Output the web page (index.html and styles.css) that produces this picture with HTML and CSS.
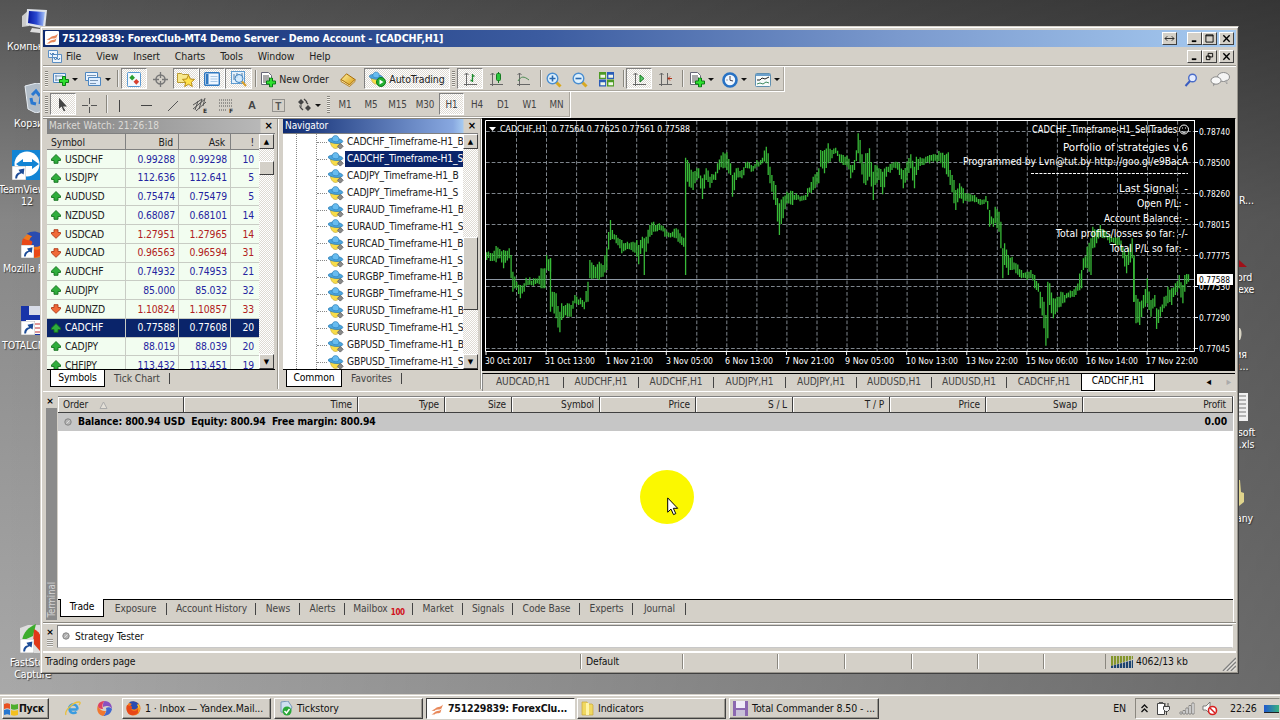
FILE: index.html
```html
<!DOCTYPE html>
<html lang="en">
<head>
<meta charset="utf-8">
<title>CADCHF,H1</title>
<link rel="stylesheet" href="styles.css">
</head>
<body>
<svg class="defs" width="0" height="0">
<defs>
<linearGradient id="gold" x1="0" y1="0" x2="1" y2="1"><stop offset="0" stop-color="#fff3a0"/><stop offset="1" stop-color="#d89a14"/></linearGradient>
<linearGradient id="scr" x1="0" y1="0" x2="1" y2="0"><stop offset="0" stop-color="#0818a0"/><stop offset=".5" stop-color="#2a48d0"/><stop offset="1" stop-color="#a8c4f8"/></linearGradient>
</defs>
<symbol id="plus" viewBox="0 0 10 10"><path d="M3.500 .5h3v3h3v3h-3v3h-3v-3h-3v-3h3z" fill="#2fe02f" stroke="#0a7a14"/></symbol>
<symbol id="fx" viewBox="0 0 14 14"><rect width="14" height="14" rx="1" fill="#fff"/><path d="M1.500 8.500c4-1 4-3 7-3.500 2 0 3-1 4.500-2.500l-1.500 4c-3 2-5 0-7 2.500zM1.500 12.500c3-1 3-3 6-3.500 2 0 3-1 4-2l-1 3.500c-3 1.500-4 0-6 2z" fill="#e8885a"/></symbol>
<symbol id="mdi" viewBox="0 0 14 13"><path d="M.5.5h9v7h-9zM4.500 4.500h9v8h-9z" fill="#eef5fc" stroke="#5b8fc4"/><path d="M2 3l1.500 2 1.500-2 1.500 2M6 8l1.500 2L9 8l1.500 2L12 8" stroke="#3c74b0" fill="none"/></symbol>
<symbol id="newchart" viewBox="0 0 16 15"><path d="M.5 1.500h12v9H.5z" fill="#eaf4ff" stroke="#4d86c0"/><path d="M2 4h8M3 3v6M2 8h5" stroke="#7794b5"/><use href="#plus" x="6" y="4" width="10" height="10"/></symbol>
<symbol id="profiles" viewBox="0 0 17 15"><path d="M.5.500h12v8H.5z" fill="#eaf4ff" stroke="#4d86c0"/><path d="M3.500 5.500h12v8h-12z" fill="#dfeeff" stroke="#4d86c0"/><path d="M2 3.500h9M5 8.500h8M5 11.500h6" stroke="#7794b5"/></symbol>
<symbol id="mwatch" viewBox="0 0 15 16"><rect x=".5" y=".5" width="14" height="15" rx="1" fill="#f4faff" stroke="#4a90d0"/><path d="M2.500 6L5.500 3l3 3-3 3z" fill="#28a030"/><path d="M7 10.500l3 3 3-3-3-3z" fill="#d84030"/></symbol>
<symbol id="target" viewBox="0 0 15 15"><circle cx="7.500" cy="7.500" r="4.500" fill="none" stroke="#777" stroke-width="1.500"/><path d="M7.500 0v6M7.500 9v6M0 7.500h6M9 7.500h6" stroke="#777" stroke-width="1.300"/></symbol>
<symbol id="star" viewBox="0 0 18 16"><path d="M.5 2.500h4l1 1h6v8H.500z" fill="#f8e88c" stroke="#b99a30"/><path d="M11.500 4l1.800 4 4.200.4-3.200 2.900 1 4.200-3.800-2.200-3.800 2.200 1-4.200L5.500 8.400 9.700 8z" fill="#ffe24c" stroke="#b88a14"/></symbol>
<symbol id="winlist" viewBox="0 0 16 14"><rect x=".7" y=".7" width="14.600" height="12.600" rx="1" fill="#f0f7ff" stroke="#2f78c0" stroke-width="1.400"/><path d="M2 2h2.500v10H2z" fill="#2f78c0"/><path d="M6.500 4.500h7M6.500 7h7M6.500 9.500h7" stroke="#a9c8e6"/></symbol>
<symbol id="tester" viewBox="0 0 16 16"><rect x=".5" y=".5" width="13" height="12" fill="#e4f1fc" stroke="#5e9bd0"/><path d="M3 3v6M6 2v5M11 2v6" stroke="#5b7ea0"/><circle cx="8" cy="7.500" r="4" fill="#cfe8fbcc" stroke="#3a80c0"/><path d="M11 10.500l4 4.500" stroke="#d8a030" stroke-width="2.200"/></symbol>
<symbol id="neworder" viewBox="0 0 15 16"><path d="M.5.500h7l3 3v9H.500z" fill="#fff" stroke="#667"/><path d="M2 4h6M2 6h7M2 8h6M2 10h4" stroke="#555"/><use href="#plus" x="5" y="5.500" width="10" height="10"/></symbol>
<symbol id="book" viewBox="0 0 16 14"><path d="M1 6.500L6.500.800 15 6.500 9.500 12z" fill="url(#gold)" stroke="#a56a08"/><path d="M1 6.500v2L9.500 13.500 15 8.500v-2L9.500 12z" fill="#fff0b0" stroke="#a56a08" stroke-width=".8"/></symbol>
<symbol id="hat" viewBox="0 0 16 15"><path d="M2.500 7h10c0 3.500-2.500 6.500-5 6.500s-5-3-5-6.500z" fill="#f8dc48" stroke="#b99a28" stroke-width=".6"/><ellipse cx="7.500" cy="5.800" rx="7.300" ry="2.600" transform="rotate(6 7.500 5.800)" fill="#4aa6e0" stroke="#2a78b0" stroke-width=".7"/><path d="M4 5C4 2 5.500 .600 7.500 .600S11 2 11 5 4 6.500 4 5z" fill="#67bcf0" stroke="#2a78b0" stroke-width=".6"/></symbol>
<symbol id="hatgear" viewBox="0 0 16 15"><use href="#hat" width="16" height="15"/><path d="M12.300 8.500l2.800 2.800-2.800 2.800-2.800-2.800z" fill="#8a8a8a" stroke="#6a6a6a"/></symbol>
<symbol id="auto" viewBox="0 0 17 16"><use href="#hat" width="15" height="15"/><circle cx="12" cy="11" r="4.500" fill="#22b030" stroke="#0c7a18"/><path d="M10.500 8.500v5l4-2.500z" fill="#fff"/></symbol>
<symbol id="bars" viewBox="0 0 15 15"><path d="M3.500 1v13M1 12.500h13M1.500 3l2-2 2 2" stroke="#666" fill="none"/><path d="M9.500 2v8M7.500 8.500h2M9.500 4h2" stroke="#1c8a2c" stroke-width="1.300"/></symbol>
<symbol id="candle" viewBox="0 0 15 15"><path d="M3.500 1v13M1 12.500h13M1.500 3l2-2 2 2" stroke="#666" fill="none"/><path d="M9.500 0v11" stroke="#167a22"/><rect x="7.500" y="1.500" width="4" height="7" rx="1" fill="#28c83c" stroke="#167a22"/></symbol>
<symbol id="line" viewBox="0 0 15 15"><path d="M3.500 1v13M1 12.500h13M1.500 3l2-2 2 2" stroke="#666" fill="none"/><path d="M2 9c3-5 6-5 11-1" stroke="#4a8a50" fill="none"/></symbol>
<symbol id="zin" viewBox="0 0 16 16"><path d="M9.500 9.500l5 5" stroke="#d8a820" stroke-width="3"/><circle cx="6.500" cy="6.500" r="5.300" fill="#dff1fd" stroke="#4a8ed0" stroke-width="1.400"/><path d="M3.500 6.500h6M6.500 3.500v6" stroke="#2868b0" stroke-width="1.600"/></symbol>
<symbol id="zout" viewBox="0 0 16 16"><path d="M9.500 9.500l5 5" stroke="#d8a820" stroke-width="3"/><circle cx="6.500" cy="6.500" r="5.300" fill="#dff1fd" stroke="#4a8ed0" stroke-width="1.400"/><path d="M3.500 6.500h6" stroke="#2868b0" stroke-width="1.600"/></symbol>
<symbol id="tile" viewBox="0 0 16 16"><path d="M0 0h7.500v7.500H0zM8.500 8h7.500v7.500H8.500z" fill="#4d9a24"/><path d="M8.500 0H16v7.500H8.500zM0 8h7.500v7.500H0z" fill="#2a5cb8"/><path d="M1.500 3h5v3h-5zM10 3h5v3h-5zM1.500 11h5v3h-5zM10 11h5v3h-5z" fill="#f0f6e8"/></symbol>
<symbol id="scroll" viewBox="0 0 15 15"><path d="M3.500 1v13M1 12.500h13M1.500 3l2-2 2 2" stroke="#666" fill="none"/><path d="M8 3v7l4-3.500z" fill="#58c868" stroke="#167a22"/></symbol>
<symbol id="shift" viewBox="0 0 15 15"><path d="M3.500 1v13M1 12.500h13M1.500 3l2-2 2 2M9.500 1v11" stroke="#666" fill="none"/><path d="M14 6.500h-4M12 4.500l-2 2 2 2" stroke="#b03018" fill="none"/></symbol>
<symbol id="clock" viewBox="0 0 16 16"><circle cx="8" cy="8" r="6.500" fill="#f2f8ff" stroke="#2872c4" stroke-width="2.600"/><path d="M8 4v4.300l3 .7M4.500 8h1" stroke="#445" fill="none"/></symbol>
<symbol id="template" viewBox="0 0 16 14"><rect x=".5" y=".5" width="15" height="13" rx="1" fill="#f5fafa" stroke="#5f8fb0"/><path d="M1 1h14v2H1z" fill="#6ba0cc"/><path d="M2 7h3l2-2 3 1 4-2" stroke="#222" fill="none"/><path d="M2 11l3-1 3 1 3-2 3 1" stroke="#3f8a60" fill="none"/></symbol>
<symbol id="search" viewBox="0 0 14 14"><circle cx="8.500" cy="5" r="3.800" fill="#e4ecff" stroke="#4a6cc8" stroke-width="1.400"/><path d="M6 8l-4.500 5" stroke="#3a5cc0" stroke-width="2"/></symbol>
<symbol id="chat" viewBox="0 0 20 15"><ellipse cx="13.500" cy="5" rx="6" ry="4.500" fill="#f4f4f4" stroke="#8a8a8a"/><path d="M15 9l2 3-.5-4z" fill="#eee" stroke="#8a8a8a" stroke-width=".6"/><ellipse cx="6" cy="8.500" rx="5" ry="3.700" fill="#f8f8f8" stroke="#8a8a8a"/><path d="M3 11.500v3l2.500-2.500z" fill="#999"/></symbol>
<symbol id="up" viewBox="0 0 10 10"><path d="M5 .5L9.500 5v1.500H7v2.800H3V6.500H.500V5z" fill="#2fae3c" stroke="#14701e" stroke-width=".9"/></symbol>
<symbol id="dn" viewBox="0 0 10 10"><path d="M5 9.300L9.500 5V3.500H7V.700H3v2.800H.500V5z" fill="#f06a38" stroke="#b03a18" stroke-width=".9"/></symbol>
<symbol id="cursor" viewBox="0 0 12 19"><path d="M.7.900v14.300l3.300-3.100 2.500 5.500 2.300-1-2.500-5.300h4.400z" fill="#fff" stroke="#000"/></symbol>
<symbol id="dot" viewBox="0 0 8 8"><circle cx="4" cy="4" r="3.200" fill="#b4b4b4" stroke="#848484"/><path d="M2.500 5.500l3-3" stroke="#ddd"/></symbol>
<symbol id="short" viewBox="0 0 13 13"><rect width="13" height="13" fill="#fff" stroke="#999" stroke-width=".6"/><path d="M3 11.500C3 8 5 6 7.500 5.800L6 3.500l5.500-1.200L10.800 8 9 6.800C6.500 7.500 5 9 4.700 11.500z" fill="#1c4c98"/></symbol>
<symbol id="firefox" viewBox="0 0 15 15"><circle cx="7.500" cy="7.500" r="7" fill="#f0781c"/><path d="M3 1.500a7 7 0 0 1 9 .8C14 5 10 10 6 8 4 7 4 4 6 3z" fill="#2a4cb0"/><path d="M1 4c1 0 2 1 3 1 2 0 3 1 1 3 2 3 6 3 8-2 1 6-4 9-8 8S-.5 8 1 4z" fill="#e84818"/><path d="M12 3c2 2 2.500 6 0 8.500 1-3 .5-5.500-1-7.500z" fill="#ffc828"/></symbol>
</svg>

<main class="desktop">
  <div class="shortcut s1"><svg width="30" height="28" viewBox="0 0 30 28"><path d="M2 8l7-6v16l-7 1z" fill="#ccc"/><path d="M7 1l20 1-2 19-19-4z" fill="#dfe3ea"/><path d="M9 3l16 1-2 14-15-3z" fill="url(#scr)"/><path d="M12 20l8 1v4l-10-1z" fill="#ddd"/></svg></div>
  <span class="lab l1">Компьютер</span>
  <div class="shortcut s2"><svg width="26" height="30" viewBox="0 0 26 30"><path d="M1 3l12-3 12 3-3 24-10 3-8-4z" fill="#c4d2e0cc" stroke="#e8eef4"/><path d="M8 12l4-4 4 5M7 15l1 5 4 1M17 14l-1 7" stroke="#2a78d0" stroke-width="3" fill="none"/></svg></div>
  <span class="lab l2">Корзина</span>
  <div class="shortcut s3"><svg width="30" height="30" viewBox="0 0 30 30"><rect width="30" height="30" fill="#1284d4"/><circle cx="15" cy="14" r="12.500" fill="#fff"/><path d="M4 14l7-5v3h9V9l7 5-7 5v-3h-9v3z" fill="#1284d4"/><use href="#short" y="16" width="14" height="14"/></svg></div>
  <span class="lab l3">TeamViewer<br>12</span>
  <div class="shortcut s4"><svg width="28" height="28" viewBox="0 0 28 28"><use href="#firefox" width="28" height="28"/><use href="#short" y="14" width="13" height="13"/></svg></div>
  <span class="lab l4">Mozilla Firefox</span>
  <div class="shortcut s5"><svg width="28" height="29" viewBox="0 0 28 29"><rect width="28" height="29" fill="#1834a8"/><path d="M8 0h14v9H8z" fill="#d8dce8"/><path d="M5 14h20v14H5z" fill="#fff"/><path d="M14 18h8M14 22h8M14 26h8" stroke="#c03030"/><use href="#short" y="15" width="14" height="14"/></svg></div>
  <span class="lab l5">TOTALCMD</span>
  <div class="shortcut s6"><svg width="28" height="29" viewBox="0 0 28 29"><path d="M0 4l8-3h20v28H0z" fill="#ddd"/><path d="M2 17C3 8 9 3 16 0l-3 12z" fill="#3cac2c"/><path d="M14 5c7 3 10 12 6 22l-7-8z" fill="#e03818"/><use href="#short" y="15" width="14" height="14"/></svg></div>
  <span class="lab l6">FastStone<br>Capture</span>
  <span class="lab r1">R...</span><svg class="tri" width="8" height="8"><path d="M0 0l8 7H0z" fill="#a01018"/></svg>
  <span class="lab r2">ord<br>.exe</span><span class="lab r3">ия<br>я...</span>
  <svg class="lever" width="6" height="16"><path d="M0 2h2c2 3 2 8 0 12H0z" fill="#d8d4c4"/></svg>
  <svg class="sheet" width="9" height="28"><path d="M0 0h9v28H0z" fill="#f0f0f0"/><path d="M0 3h7M0 7h7M0 11h7M0 15h7M0 19h7M0 23h7" stroke="#777"/></svg>
  <span class="lab r4">soft<br>.xls</span>
  <svg class="sheet key" width="6" height="26"><path d="M0 0h1l1 12 3 1v9l-5 4z" fill="#e0d48c"/></svg>
  <span class="lab r5">any</span>

  <section class="window">
    <header class="title"><svg width="14" height="14"><use href="#fx"/></svg><b>751229839: ForexClub-MT4 Demo Server - Demo Account - [CADCHF,H1]</b>
      <div class="caps"><i class="cap"><svg viewBox="0 0 12 10"><path d="M1 5h10M3.500 2.500L1 5l2.500 2.500M8.500 2.500L11 5 8.500 7.500" stroke="#222" fill="none"/></svg></i><i class="cap c2"><svg viewBox="0 0 12 10"><path d="M3 8h5" stroke="#000" stroke-width="2"/></svg></i><i class="cap"><svg viewBox="0 0 12 10"><path d="M2 1h8v8H2zM2 2h8" stroke="#000" fill="none"/></svg></i><i class="cap c3"><svg viewBox="0 0 12 10"><path d="M2.500 1.500l7 7M9.500 1.500l-7 7" stroke="#000" stroke-width="1.500"/></svg></i></div>
    </header>
    <nav class="menu"><svg width="14" height="13"><use href="#mdi"/></svg><span>File</span><span>View</span><span>Insert</span><span>Charts</span><span>Tools</span><span>Window</span><span>Help</span>
      <div class="caps"><i class="cap"><svg viewBox="0 0 12 10"><path d="M3 8h5" stroke="#000" stroke-width="2"/></svg></i><i class="cap"><svg viewBox="0 0 12 10"><path d="M4.500 1.500h5v4h-5zM2.500 4.500h4v4h-4z" stroke="#000" fill="none"/></svg></i><i class="cap c3"><svg viewBox="0 0 12 10"><path d="M2.500 1.500l7 7M9.500 1.500l-7 7" stroke="#000" stroke-width="1.500"/></svg></i></div>
    </nav>
    <div class="toolbar t1">
      <div class="strip strip1">
        <i class="grip"></i>
        <span class="drop"><svg width="16" height="15"><use href="#newchart"/></svg></span>
        <span class="drop"><svg width="17" height="15"><use href="#profiles"/></svg></span>
        <i class="vsep"></i>
        <span class="on"><svg width="14" height="15"><use href="#mwatch"/></svg></span>
        <span><svg width="15" height="15"><use href="#target"/></svg></span>
        <span class="on"><svg width="18" height="16"><use href="#star"/></svg></span>
        <span class="on"><svg width="16" height="14"><use href="#winlist"/></svg></span>
        <span class="on"><svg width="16" height="16"><use href="#tester"/></svg></span>
        <i class="vsep"></i>
        <span class="txt"><svg width="15" height="16"><use href="#neworder"/></svg>New Order</span>
        <span><svg width="16" height="14"><use href="#book"/></svg></span>
        <span class="on txt"><svg width="17" height="16"><use href="#auto"/></svg>AutoTrading</span>
        <i class="grip"></i>
        <span class="on"><svg width="15" height="15"><use href="#bars"/></svg></span>
        <span><svg width="15" height="15"><use href="#candle"/></svg></span>
        <span><svg width="15" height="15"><use href="#line"/></svg></span>
        <i class="vsep"></i>
        <span><svg width="16" height="16"><use href="#zin"/></svg></span>
        <span><svg width="16" height="16"><use href="#zout"/></svg></span>
        <span><svg width="15" height="15"><use href="#tile"/></svg></span>
        <i class="vsep"></i>
        <span class="on"><svg width="15" height="15"><use href="#scroll"/></svg></span>
        <span><svg width="15" height="15"><use href="#shift"/></svg></span>
        <i class="vsep"></i>
        <span class="drop"><svg width="15" height="16"><use href="#neworder"/></svg></span>
        <span class="drop"><svg width="16" height="16"><use href="#clock"/></svg></span>
        <span class="drop"><svg width="16" height="14"><use href="#template"/></svg></span>
      </div>
      <div class="tools"><svg width="14" height="14"><use href="#search"/></svg><svg width="20" height="15"><use href="#chat"/></svg></div>
    </div>
    <div class="toolbar">
      <div class="strip strip2">
        <i class="grip"></i>
        <span class="on"><svg width="10" height="15" viewBox="0 0 12 19"><path d="M1 1v14l3-3 3 6 2-1-3-5h5z" fill="#444"/></svg></span>
        <span><svg width="15" height="15"><path d="M7.500 0v6M7.500 9v6M0 7.500h6M9 7.500h6" stroke="#555"/></svg></span>
        <i class="vsep"></i>
        <span><svg width="15" height="15"><path d="M7.500 2v12" stroke="#444"/></svg></span>
        <span><svg width="15" height="15"><path d="M2 7.500h11" stroke="#444"/></svg></span>
        <span><svg width="15" height="15"><path d="M2 13L12 3" stroke="#555"/></svg></span>
        <span><svg width="17" height="17"><path d="M1 12L13 2M1 8l9-6M4 14L14 5M3 13l3-9M7 12l3-10M11 9l2-8" stroke="#555"/><text x="11" y="16" class="tiny">E</text></svg></span>
        <span><svg width="17" height="17"><path d="M1 3h13M1 6h13M1 9h13M1 13h8" stroke="#555" stroke-dasharray="1 1"/><text x="11" y="16" class="tiny">F</text></svg></span>
        <span class="lett">A</span>
        <span><svg width="15" height="15"><rect x="1.500" y="1.500" width="12" height="12" fill="none" stroke="#555" stroke-dasharray="1 1"/><text x="4.300" y="11.500" class="tee">T</text></svg></span>
        <span class="drop"><svg width="15" height="14"><path d="M1 4l3-3 3 3-3 3zM8 10l3-3 3 3-3 3z" fill="#444"/><path d="M7 1l3 3M3 9l3 3M9 4l2 2M2 8h3" stroke="#444" stroke-width="1.200"/></svg></span>
        <i class="grip"></i>
        <span>M1</span><span>M5</span><span>M15</span><span>M30</span><span class="on">H1</span><span>H4</span><span>D1</span><span>W1</span><span>MN</span>
      </div>
    </div>

    <div class="panels">
      <section class="panel market">
        <header class="ptitle off">Market Watch: 21:26:18<em>×</em></header>
        <div class="pbody">
          <div class="grid-wrap"><div class="qrow qhead"><span>Symbol</span><span>Bid</span><span>Ask</span><span>!</span></div><div id="quotes"></div></div>
          <div class="sbar m"><i class="sb">▲</i><i class="thumb"></i><i class="sb">▼</i></div>
        </div>
        <footer class="ptabs"><b>Symbols</b><span>Tick Chart</span></footer>
      </section>
      <section class="panel navi">
        <header class="ptitle">Navigator<em>×</em></header>
        <div class="pbody">
          <div id="tree"></div>
          <div class="sbar n"><i class="sb">▲</i><i class="thumb"></i><i class="sb">▼</i></div>
        </div>
        <footer class="ptabs"><b>Common</b><span>Favorites</span></footer>
      </section>
      <section class="chartcol">
        <svg id="chart" width="753" height="253" viewBox="482 118 753 253"></svg>
        <footer class="ctabs"><span>AUDCAD,H1</span><span>AUDCHF,H1</span><span>AUDCHF,H1</span><span>AUDJPY,H1</span><span>AUDJPY,H1</span><span>AUDUSD,H1</span><span>AUDUSD,H1</span><span>CADCHF,H1</span><b>CADCHF,H1</b><i>◂</i><i class="dim">▸</i></footer>
      </section>
    </div>

    <section class="terminal">
      <aside><em>×</em><div class="side"><span>Terminal</span></div></aside>
      <div class="tmain">
        <div class="thead"><span>Order<svg width="9" height="8"><path d="M4.500 1L1 7.500h7z" fill="#e4e0d8" stroke="#aaa"/></svg></span><span>Time</span><span>Type</span><span>Size</span><span>Symbol</span><span>Price</span><span>S / L</span><span>T / P</span><span>Price</span><span>Swap</span><span>Profit</span></div>
        <div class="bal"><svg width="8" height="8"><use href="#dot"/></svg><b>Balance: 800.94 USD&nbsp; Equity: 800.94&nbsp; Free margin: 800.94</b><b class="zero">0.00</b></div>
        <div class="blank"></div>
        <footer class="ttabs"><b>Trade</b><span>Exposure</span><span>Account History</span><span>News</span><span>Alerts</span><span>Mailbox<sub>100</sub></span><span>Market</span><span>Signals</span><span>Code Base</span><span>Experts</span><span>Journal</span></footer>
      </div>
    </section>
    <section class="strategy"><aside><em>×</em><i></i></aside><div class="sbox"><svg width="8" height="8"><use href="#dot"/></svg>Strategy Tester</div></section>
    <footer class="status"><span>Trading orders page</span><span>Default</span><span></span><span></span><span></span><span></span><span></span><span class="conn"><svg width="22" height="13"><path d="M0 1h22v3L0 11z" fill="#84962c"/><path d="M0 13v-2L22 5v8z" fill="#1c4470"/><path d="M2.500 0v13M5.500 0v13M8.500 0v13M11.500 0v13M14.500 0v13M17.500 0v13M20.500 0v13" stroke="#d4d0c8" stroke-width=".8"/></svg>4062/13 kb</span>
      <svg class="size" width="14" height="14"><path d="M1 14L14 1M5 14l9-9M9 14l5-5" stroke="#808080" stroke-width="1.500"/><path d="M2.500 14L14 2.500M6.500 14L14 6.500M10.500 14l3.500-3.500" stroke="#fff" stroke-width=".7"/></svg></footer>
  </section>

  <div class="halo"></div>
  <svg class="pointer" width="12" height="19"><use href="#cursor"/></svg>

  <footer class="taskbar">
    <b class="start"><svg width="14" height="14" viewBox="0 0 14 14"><path d="M0 2c3-1 4-1 6 0v5C4 6 3 6 0 7z" fill="#e85020"/><path d="M7 2c2 1 4 1 7 0v5c-3 1-5 1-7 0z" fill="#4cae2c"/><path d="M0 8c3-1 4-1 6 0v5c-2-1-3-1-6 0z" fill="#2878d0"/><path d="M7 8c2 1 4 1 7 0v5c-3 1-5 1-7 0z" fill="#f4c020"/></svg>Пуск</b>
    <span class="quick"><svg width="16" height="15" viewBox="0 0 16 15"><path d="M12.500 8.500H4.500C5 12 9 13 11.500 11" stroke="#3a9ce0" stroke-width="2.400" fill="none"/><path d="M12.500 8.500C13 2 4 2 4 8" stroke="#3a9ce0" stroke-width="2.400" fill="none"/><path d="M1 14C-1 10 8 1 14 1c2 0 1 2 0 3" stroke="#e8c040" fill="none" stroke-width="1.300"/></svg></span>
    <span class="quick"><svg width="15" height="15" viewBox="0 0 15 15"><path d="M7.500 0C13 0 15 4 15 8 12 4 10 5 6 6 6 3 6 1 7.500 0z" fill="#8a50c0"/><path d="M15 8c-1 5-5 7-9 7 3-3 4-5 3-8 2-1 4-1 6 1z" fill="#4068d0"/><path d="M6 15C1 14-1 9 1 4c1 4 3 6 8 6-1 2-1 4-3 5z" fill="#f07830"/><path d="M1 4C2 1 5 0 7.500 0 5 3 5 5 6 8 3 8 1 7 1 4z" fill="#e04060"/></svg></span>
    <span class="task"><svg width="15" height="15"><use href="#firefox"/></svg>1 · Inbox — Yandex.Mail...</span>
    <span class="task"><svg width="15" height="15" viewBox="0 0 15 15"><path d="M3 1l7-1 4 6-2 6-9-1z" fill="#cfe0f0" stroke="#7a98b8"/><circle cx="9" cy="10" r="4.500" fill="#2aa838"/><path d="M6.500 10l2 2 3-4" stroke="#fff" stroke-width="1.500" fill="none"/></svg>Tickstory</span>
    <b class="task act"><svg width="14" height="14"><use href="#fx"/></svg>751229839: ForexClu...</b>
    <span class="task"><svg width="13" height="15" viewBox="0 0 13 15"><path d="M1 1h5l1 2h4l1 1v10H1z" fill="#f0d860" stroke="#c8a838" stroke-width=".7"/><path d="M5 2h3v12H5z" fill="#fff4a8"/></svg>Indicators</span>
    <span class="task"><svg width="15" height="15" viewBox="0 0 15 15"><path d="M0 0h15v15H0z" fill="#8c68b0"/><path d="M3 0h9v7H3z" fill="#f0ecf8"/><path d="M3 9h9v6H3z" fill="#c8c0d8"/></svg>Total Commander 8.50 - ...</span>
    <span class="en">EN</span>
    <div class="tray"><svg width="9" height="11"><path d="M1.500 5l3-3 3 3M1.500 9l3-3 3 3" stroke="#111" stroke-width="1.300" fill="none"/></svg>
      <svg width="16" height="15"><path d="M1.500 2.500h7v11h-7z" fill="#fff" stroke="#444"/><path d="M3 1h4v2H3z" fill="#555"/><path d="M7.500 5.500h6v3l-2 2h-2l-2-2zM9 5V2M12 5V2M10.500 11v3" fill="#eee" stroke="#444"/></svg>
      <svg width="16" height="13"><path d="M1 10h2v2H1zM4 8.500h2V12H4zM7 6h2v6H7zM10 3.500h2V12h-2zM13 1h2v11h-2z" fill="#fff" stroke="#666" stroke-width=".7"/></svg>
      <svg width="16" height="15"><path d="M1 5h3l4-4v12L4 9H1z" fill="#f8f8f8" stroke="#666" stroke-width=".8"/><circle cx="10.500" cy="9.500" r="4" fill="#fff" stroke="#d82020" stroke-width="1.600"/><path d="M8 7l5 5" stroke="#d82020" stroke-width="1.500"/></svg>
      <span>22:26</span><i class="lang"></i></div>
  </footer>
</main>
<script src="script.js"></script>
</body>
</html>
```
FILE: styles.css
```css
* { box-sizing: border-box; }
body { margin: 0; width: 1280px; height: 720px; overflow: hidden; font: 10px/1 "DejaVu Sans Condensed", "DejaVu Sans", sans-serif; font-stretch: condensed; letter-spacing: -0.1px; color: #222; }
i, em { font-style: normal; }
svg { display: block; flex: none; }
.defs { position: absolute; }
.desktop { position: relative; width: 1280px; height: 720px; overflow: hidden; display: flex; flex-direction: column; justify-content: flex-end;
  background: linear-gradient(90deg, rgba(0,0,0,0), rgba(0,0,0,.37)), linear-gradient(#545454, #696969 90px, #868686 220px, #949494 400px, #a8a8a8 690px); }
.shortcut, .lab, .tri, .sheet, .lever { position: absolute; }
.lab { color: #fff; font-size: 10.5px; line-height: 12px; text-shadow: 1px 1px 1px #333; text-align: center; white-space: nowrap; }
.s1 { left: 20px; top: 8px; } .l1 { left: 7px; top: 40px; }
.s2 { left: 24px; top: 83px; } .l2 { left: 14px; top: 117px; }
.s3 { left: 12px; top: 150px; } .l3 { left: -1px; top: 183px; }
.s4 { left: 21px; top: 231px; } .l4 { left: 3px; top: 262px; }
.s5 { left: 21px; top: 306px; } .l5 { left: 2px; top: 339px; }
.s6 { left: 20px; top: 624px; } .l6 { left: 10px; top: 656px; }
.r1 { left: 1239px; top: 194px; } .tri { left: 1239px; top: 260px; }
.r2 { left: 1235px; top: 271px; } .r3 { left: 1234px; top: 348px; }
.lever { left: 1238px; top: 326px; }
.sheet { left: 1239px; top: 393px; } .key { top: 480px; }
.r4 { left: 1238px; top: 426px; } .r5 { left: 1236px; top: 512px; }

.window { position: absolute; left: 40px; top: 26px; width: 1199px; height: 648px; padding: 3px 2px 2px; background: #d4d0c8; border: 1px solid; border-color: #d4d0c8 #404040 #404040 #d4d0c8; box-shadow: inset 1px 1px #fff, inset -1px -1px #9a968e; display: flex; flex-direction: column; }
.title { flex: none; height: 17px; display: flex; align-items: center; gap: 3px; padding: 0 0 1px 2px; color: #fff; background: linear-gradient(90deg, #0e2a70, #3c5ca0 42%, #7b9ace 72%, #a6caf0); }
.title b { font: bold 10.6px "DejaVu Sans Condensed", sans-serif; letter-spacing: -.1px; }
.caps { margin-left: auto; display: flex; padding-right: 2px; }
.cap { width: 15px; height: 13px; background: #d4d0c8; border: 1px solid; border-color: #fff #404040 #404040 #fff; display: flex; align-items: center; justify-content: center; }
.cap svg { width: 11px; height: 9px; }
.c2 { margin-left: 10px; } .c3 { margin-left: 2px; }
.menu { flex: none; height: 20px; padding: 0 0 1px 5px; display: flex; align-items: center; border-bottom: 1px solid #fff; box-shadow: inset 0 -1px #9a978f; font-size: 10.5px; }
.menu span { margin-right: 15px; } .menu > svg { margin-right: 4px; }
.toolbar { flex: none; height: 26px; display: flex; align-items: stretch; }
.toolbar.t1 { height: 25px; }
.strip { display: grid; border-right: 1px solid #fff; border-bottom: 1px solid #fff; box-shadow: inset -1px -1px #aaa69e; padding-bottom: 1px; }
.strip1 { grid-template-columns: 7px 30px 34px 7px 26px 26px 26px 26px 27px 6px 74px 32px 86px 7px 26px 27px 27px 3px 27px 26px 27px 6px 26px 27px 6px 32px 33px 34px; }
.strip2 { grid-template-columns: 7px 26px 27px 3px 27px 27px 27px 26px 26px 26px 26px 34px 7px 26px 26px 27px 28px 25px 26px 26px 27px 27px; color: #444; font-size: 9.8px; }
.strip span { display: flex; align-items: center; justify-content: center; white-space: nowrap; padding-top: 2px; }
.strip .txt { gap: 3px; color: #222; font-size: 10.5px; }
.strip .on { padding-top: 1px; margin: 1px 0; border: 1px solid; border-color: #808080 #fff #fff #808080; background: repeating-conic-gradient(#fff 0 25%, #dedad3 0 50%) 0 0/2px 2px; }
.strip .drop { gap: 3px; padding-left: 1px; }
.drop::after { content: ""; border: 3px solid transparent; border-top-color: #111; border-bottom: 0; }
.grip { width: 3px; margin: 4px 0 3px 2px; background: repeating-linear-gradient(#88857e 0 1px, #f2f0ea 1px 2px); }
.vsep { width: 2px; margin: 3px 0 3px 3px; border-left: 1px solid #8a877f; border-right: 1px solid #eee; justify-self: start; }
.tiny { font: bold 6px "DejaVu Sans", sans-serif; fill: #333; } .tee { font: bold 10px "Liberation Sans", sans-serif; fill: #555; }
.lett { font: bold 11px "Liberation Sans", sans-serif; }
.tools { margin-left: auto; padding-right: 6px; display: flex; align-items: center; gap: 12px; }

.panels { flex: none; height: 273px; padding-left: 4px; display: flex; border-top: 1px solid #8a877f; }
.panel { display: flex; flex-direction: column; height: 270px; }
.market { width: 228px; margin-right: 8px; } .navi { width: 195px; margin-right: 4px; }
.market, .navi { box-shadow: 2px 0 #d4d0c8, 3px 0 #9a978f, 4px 0 #fff; }
.ptitle { flex: none; height: 14px; display: flex; align-items: center; padding-left: 2px; color: #fff; font-size: 10px; background: linear-gradient(90deg, #0e2a70, #88a8e0 170px, #a6caf0 180px, #d4d0c8 181px); }
.ptitle.off { color: #dcdad6; background: linear-gradient(90deg, #828282, #b8b8b8 213px, #d4d0c8 214px); letter-spacing: .1px; }
.ptitle em { margin: 0 2px 0 auto; color: #000; font: bold 10px/10px "DejaVu Sans", sans-serif; }
.pbody { flex: none; height: 237px; display: flex; overflow: hidden; border-top: 1px solid #808080; border-bottom: 1px solid #000; }
.grid-wrap { width: 212px; background: #f2fdf0; }
.qrow { display: grid; grid-template-columns: 79px 53px 52px 28px; height: 18.75px; border-bottom: 1px solid #c8ccc4; font-size: 10.3px; }
.qrow span { display: flex; align-items: center; justify-content: flex-end; padding-right: 3px; border-right: 1px solid #c8ccc4; }
.qrow span:first-child { justify-content: flex-start; padding-left: 4px; gap: 4px; }
.qrow span:last-child { padding-right: 5px; border-right: 0; }
.qrow.qhead { height: 16px; background: #d4d0c8; border: 0; box-shadow: inset 0 -1px #808080; }
.qhead span { border-right: 1px solid #808080; padding-right: 5px; }
.u span + span { color: #2424a0; } .d span + span { color: #b02020; }
.qrow.sel { background: #0a246a; } .qrow.sel span { color: #fff; }
.sbar { width: 15px; background: repeating-conic-gradient(#fff 0 25%, #dedad3 0 50%) 0 0/2px 2px; display: flex; flex-direction: column; justify-content: space-between; }
.sb, .thumb { display: flex; justify-content: center; align-items: center; background: #d4d0c8; border: 1px solid; border-color: #fff #404040 #404040 #fff; }
.sb { height: 15px; font: 7px "DejaVu Sans", sans-serif; color: #000; }
.m .thumb { height: 14px; margin: 12px 0 auto; } .n .thumb { height: 73px; margin: 88px 0 auto; }
#tree { width: 180px; overflow: hidden; background: repeating-linear-gradient(#888 0 1px, transparent 1px 2px) 13px 0/1px 100% no-repeat, repeating-linear-gradient(#888 0 1px, transparent 1px 2px) 33px 0/1px 100% no-repeat, #fff; }
.node { display: flex; align-items: center; height: 16.9px; padding-left: 34px; white-space: nowrap; font-size: 10.2px; letter-spacing: -.13px; }
.node::before { content: ""; width: 10px; flex: none; margin-right: 1px; border-top: 1px dotted #888; }
.node span { height: 16px; display: flex; align-items: center; margin-left: 1px; padding-left: 2px; width: 130px; flex: none; }
.node.sel span { background: #0a246a; color: #fff; }
.ptabs, .ctabs, .ttabs { height: 17px; display: flex; align-items: center; color: #444; }
.ptabs { padding-left: 3px; font-size: 10.3px; }
.ptabs b, .ttabs b, .ctabs b { font-weight: normal; color: #000; background: #fff; border: 1px solid #000; border-top: 0; height: 17px; display: flex; align-items: center; justify-content: center; }
.market b { width: 55px; } .navi b { width: 56px; }
.ptabs b { margin-top: -1px; } .ptabs span { padding: 0 9px; border-right: 1px solid #444; }
.chartcol { width: 753px; height: 272px; margin-top: -1px; }
#chart { background: #000; }
.ctabs { height: 18px; margin-top: 2px; padding-bottom: 3px; border-top: 1px solid #000; border-left: 1px solid #888; display: grid; grid-template-columns: 81px 75px 75px 72px 71px 75px 75px 74px 74px 56px 20px; font-size: 10.1px; }
.ctabs span { text-align: center; border-right: 1px solid #444; }
.ctabs span:nth-child(8) { border-right: 0; }
.ctabs b { margin-top: 0; padding-bottom: 1px; } .ctabs i { text-align: right; color: #000; } .ctabs .dim { color: #aaa; }

.terminal { flex: none; height: 231px; display: flex; padding-top: 4px; border-top: 1px solid #fff; }
.terminal aside { width: 14px; display: flex; flex-direction: column; align-items: center; }
aside em { font: bold 9px/11px "DejaVu Sans", sans-serif; color: #000; }
.side { width: 11px; flex: 1; margin: 1px 0 2px 2px; background: #8b8b8b; color: #d4d4d4; display: flex; justify-content: center; align-items: flex-end; }
.side span { writing-mode: vertical-rl; transform: rotate(180deg); margin-bottom: 3px; font-size: 9.6px; line-height: 11px; }
.tmain { width: 1176px; margin-left: 1px; display: flex; flex-direction: column; border-right: 1px solid #fff; }
.thead { height: 17px; display: grid; grid-template-columns: 126px 174px 87px 67px 88px 96px 97px 97px 96px 97px 150px; border-top: 1px solid #808080; font-size: 10px; }
.thead span { display: flex; align-items: center; justify-content: flex-end; padding-right: 5px; border-right: 1px solid #404040; border-bottom: 1px solid #404040; box-shadow: inset 1px 1px #fff; }
.thead span:first-child { justify-content: flex-start; gap: 11px; padding-left: 5px; }
.thead span:last-child { padding-right: 6px; }
.bal { height: 18px; background: #c6c6c6; color: #000; display: flex; align-items: center; padding: 0 6px 1px; gap: 6px; font-size: 10.3px; letter-spacing: -.1px; }
.zero { margin-left: auto; }
.blank { flex: 1; background: #fff; border-bottom: 1px solid #000; }
.ttabs { flex: none; height: 22px; align-items: start; padding-left: 2px; font-size: 10.2px; display: grid; grid-template-columns: 44px 63px 89px 44px 45px 68px 50px 50px 67px 53px 53px; }
.ttabs b { width: 44px; margin-top: -1px; height: 18px; }
.ttabs span { height: 12px; margin-top: 3px; line-height: 11px; white-space: nowrap; text-align: center; box-shadow: inset -1px 0 #444; }
.ttabs sub { color: #d01020; font: bold 8px/1 "DejaVu Sans Condensed", sans-serif; margin-left: 3px; vertical-align: -3px; letter-spacing: -.3px; }
.strategy { flex: none; height: 29px; padding: 2px 0 3px; display: flex; border-top: 1px solid #8a877f; box-shadow: inset 0 1px #fff; }
.strategy aside { width: 14px; text-align: center; padding-top: 2px; }
.strategy aside i { display: block; width: 6px; height: 8px; margin: 1px auto 0; background: repeating-linear-gradient(#9a978f 0 1px, #eee 1px 2px); }
.sbox { width: 1176px; background: #fff; border: 1px solid; border-color: #808080 #fff #c8c8c8 #808080; display: flex; align-items: center; gap: 5px; padding: 0 0 1px 4px; font-size: 10.3px; color: #111; }
.status { flex: 1; border-top: 1px solid #fff; box-shadow: inset 0 1px #fff; display: grid; grid-template-columns: 538px 102px 95px 67px 67px 66px 66px 1fr 14px; font-size: 10.3px; color: #111; }
.status span { margin: 2px 0; display: flex; align-items: center; padding-left: 5px; border-right: 1px solid #8a877f; box-shadow: 1px 0 #fff; }
.status span:first-child { padding-left: 2px; }
.status .conn { gap: 3px; border: 0; box-shadow: none; margin-left: 61px; border-left: 1px solid #8a877f; }
.size { align-self: end; }

.halo { position: absolute; left: 640px; top: 470px; width: 54px; height: 54px; border-radius: 50%; background: #fbf800; }
.pointer { position: absolute; left: 667px; top: 497px; }
.taskbar { position: relative; height: 26px; background: #d4d0c8; border-top: 1px solid #d4d0c8; box-shadow: inset 0 1px #fff; padding: 3px 0 1px 2px; display: grid; grid-template-columns: 47px 40px 33px 149px 3px 149px 3px 149px 2px 149px 3px 150px 1fr 145px; font-size: 10.5px; color: #111; }
.taskbar > * { grid-row: 1; }
.start, .task { display: flex; align-items: center; gap: 4px; white-space: nowrap; overflow: hidden; border: 1px solid; border-color: #fff #404040 #404040 #fff; box-shadow: inset -1px -1px #9a978f; }
.start { gap: 1px; padding-left: 1px; font-size: 10.5px; letter-spacing: -.3px; }
.task { padding-left: 3px; }
.task:nth-child(4) { grid-column: 4; } .task:nth-child(5) { grid-column: 6; } .task:nth-child(6) { grid-column: 8; } .task:nth-child(7) { grid-column: 10; } .task:nth-child(8) { grid-column: 12; }
.act { background: #fff; border-color: #404040 #fff #fff #404040; box-shadow: none; letter-spacing: -.2px; }
.quick { display: flex; align-items: center; padding-left: 16px; } .quick + .quick { padding-left: 8px; }
.en { grid-column: 13; display: flex; align-items: center; justify-content: flex-end; padding-right: 9px; }
.tray { grid-column: 14; border: 1px solid; border-color: #8a877f transparent #fff #8a877f; display: flex; align-items: center; gap: 7px; padding-left: 4px; overflow: hidden; }
.tray span { margin: 0 0 0 5px; } .lang { width: 20px; height: 8px; flex: none; background: linear-gradient(90deg, #2058d0, #38b878 80%); border-bottom: 1px solid #222; }
.ct { font-family: "DejaVu Sans Condensed", sans-serif; fill: #fff; letter-spacing: 0; }
```
FILE: script.js
```js
const quotes = [
  ['u', 'USDCHF', '0.99288', '0.99298', 10], ['u', 'USDJPY', '112.636', '112.641', 5],
  ['u', 'AUDUSD', '0.75474', '0.75479', 5], ['u', 'NZDUSD', '0.68087', '0.68101', 14],
  ['d', 'USDCAD', '1.27951', '1.27965', 14], ['d', 'AUDCAD', '0.96563', '0.96594', 31],
  ['u', 'AUDCHF', '0.74932', '0.74953', 21], ['u', 'AUDJPY', '85.000', '85.032', 32],
  ['d', 'AUDNZD', '1.10824', '1.10857', 33], ['u sel', 'CADCHF', '0.77588', '0.77608', 20],
  ['u', 'CADJPY', '88.019', '88.039', 20], ['u', 'CHFJPY', '113.432', '113.451', 19]];
document.getElementById('quotes').innerHTML = quotes.map(([c, s, b, a, n]) =>
  `<div class="qrow ${c}"><span><svg width="10" height="10"><use href="#${c[0] === 'u' ? 'up' : 'dn'}"/></svg>${s}</span><span>${b}</span><span>${a}</span><span>${n}</span></div>`).join('');

const experts = ['CADCHF', 'CADJPY', 'EURAUD', 'EURCAD', 'EURGBP', 'EURUSD', 'GBPUSD'];
document.getElementById('tree').innerHTML = experts.flatMap(s => ['B', 'S'].map(k => [s, k])).map(([s, k], i) =>
  `<div class="node${i === 1 ? ' sel' : ''}"><svg width="16" height="15"><use href="#hatgear"/></svg><span>${s}_Timeframe-H1_${k}</span></div>`).join('');

// Price envelope: x, high, low in thirds of a pixel from (480, 115).
const env = [20,412,435,35,415,438,48,393,442,60,402,430,70,405,460,85,400,430,92,420,490,100,470,530,110,500,520,122,510,550,130,505,530,140,488,512,160,490,512,175,482,508,185,460,520,195,460,520,200,420,465,209,430,470,212,430,590,218,530,575,226,535,610,238,590,652,246,565,615,260,565,605,272,570,605,285,540,565,300,548,568,313,560,583,322,500,560,332,435,490,345,455,490,358,440,495,368,450,485,378,400,465,390,315,375,398,345,372,410,360,385,425,375,415,440,380,402,455,382,405,468,375,425,478,390,448,485,365,400,492,370,480,500,365,410,508,330,365,522,320,350,540,325,345,555,340,365,575,350,365,590,340,370,600,355,385,612,368,395,617,128,480,620,135,200,628,145,215,638,170,225,648,160,195,656,160,190,668,190,252,680,160,195,692,185,218,705,170,195,715,145,175,728,112,160,740,112,165,750,145,180,760,180,245,770,160,195,785,165,190,800,140,160,815,150,170,830,135,155,845,128,145,858,95,145,865,115,180,875,180,230,885,210,270,898,265,360,908,245,310,920,230,265,935,228,270,950,235,255,975,240,255,985,220,245,1000,185,225,1015,160,205,1024,105,155,1033,105,175,1045,85,145,1055,105,130,1065,98,115,1080,118,140,
1092,120,150,1102,122,155,1113,150,190,1125,135,165,1134,55,115,1142,75,145,1150,145,205,1158,115,210,1170,100,185,1178,170,255,1186,150,210,1198,160,195,1208,170,238,1220,155,185,1235,145,165,1250,140,160,1260,145,180,1272,165,220,1280,140,195,1292,118,160,1302,155,220,1312,125,180,1325,130,150,1340,125,145,1360,118,140,1378,108,138,1392,120,160,1404,112,185,1412,165,210,1420,195,265,1428,225,285,1438,205,250,1450,220,265,1465,235,260,1485,240,262,1500,252,270,1520,243,262,1530,285,335,1540,310,335,1548,275,325,1555,290,350,1562,320,400,1568,400,490,1576,385,450,1583,420,480,1595,425,465,1610,445,475,1625,465,490,1640,470,495,1655,465,490,1665,480,520,1675,505,530,1683,530,580,1692,560,640,1698,600,692,1704,500,670,1710,505,570,1718,550,610,1730,545,590,1745,530,575,1760,535,550,1775,528,545,1790,515,540,1802,465,520,1812,430,465,1822,395,460,1835,370,480,1840,335,400,1850,345,385,1860,330,365,1875,345,370,1890,360,385,1905,365,390,1918,365,390,1928,395,430,1938,420,475,1948,400,450,1955,370,430,1960,420,560,1965,500,560,1970,540,625,1980,560,630,1990,540,580,2002,490,565,2012,555,605,2022,540,575,2030,580,642,2040,575,605,2055,545,580,2065,515,565,2075,520,570,2085,505,540,2098,480,520,2107,510,565,2115,480,530,2125,478,500];
const pts = [];
for (let i = 0; i < env.length; i += 3) pts.push(env.slice(i, i + 3));
let seed = 7;
const rnd = () => (seed = seed * 16807 % 2147483647) / 2147483647;
let green = '';
for (let x = 20; x <= 2126; x += 5.63) {
  let p = pts.find(q => Math.abs(q[0] - x) < 2.82), hi, lo;
  if (p) { hi = p[1]; lo = p[2]; } else {
    let k = pts.findIndex(q => q[0] > x); if (k < 1) continue;
    let a = pts[k - 1], b = pts[k];
    if (a[0] === 617) a = pts[k]; if (b[0] === 617) b = pts[k - 1];
    const t = (x - a[0]) / ((b[0] - a[0]) || 1), c = Math.max(0, Math.min(1, t));
    hi = a[1] + (b[1] - a[1]) * c + (rnd() - .3) * 12; lo = a[2] + (b[2] - a[2]) * c - (rnd() - .3) * 12;
    if (lo - hi < 14) lo = hi + 14;
  }
  green += `M${(480 + x / 3).toFixed(1)} ${(115 + hi / 3).toFixed(1)}V${(115 + lo / 3).toFixed(1)}`;
}
let out = '', grid = '';
for (let x = 516.5; x < 1194; x += 30.05) grid += `M${x.toFixed(1)} 121V351`;
const prices = ['0.78740', '0.78500', '0.78260', '0.78015', '0.77775', '0.77530', '0.77290', '0.77045'];
prices.forEach((p, i) => { grid += `M486 ${131.5 + i * 31}H1194`; });
out += `<path d="${grid}" stroke="#8c949c" stroke-dasharray="3.700 2" fill="none" stroke-width=".9"/>`;
out += `<path d="M486 279.500H1194" stroke="#8d98a4"/><path d="${green}" stroke="#38ba38" stroke-width="1.300" fill="none"/>`;
out += `<path d="M211 430M550.500 258.300V311.700M1133.700 258V302" stroke="#38ba38" stroke-width="1.300"/>`;
out += `<path d="M485.500 351.500V120.500H1194M1194.500 120V351.500H485.500" stroke="#fff" fill="none"/>`;
const text = (s, x, y, w, size, end, fill) => {
  out += `<text class="ct" x="${end ? x - w : x}" y="${y}" font-size="${size}" textLength="${w}" lengthAdjust="spacingAndGlyphs"${fill ? ` style="fill:${fill}"` : ''}>${s}</text>`;
};
prices.forEach((p, i) => { out += `<path d="M1194 ${131.5 + i * 31}h4" stroke="#fff"/>`; text(p, 1199, 135.3 + i * 31, 31, 9.5); });
out += '<rect x="1197" y="274" width="36" height="11" fill="#fff"/>';
text('0.77588', 1199, 283, 31, 9.5, false, '#000');
[['30 Oct 2017', 485, 47], ['31 Oct 13:00', 545, 50], ['1 Nov 21:00', 606, 47], ['3 Nov 05:00', 666, 47], ['6 Nov 13:00', 725, 48], ['7 Nov 21:00', 785, 49], ['9 Nov 05:00', 845, 49], ['10 Nov 13:00', 906, 52], ['13 Nov 22:00', 966, 52], ['15 Nov 06:00', 1026, 52], ['16 Nov 14:00', 1086, 52], ['17 Nov 22:00', 1146, 52]]
  .forEach(([s, x, w], i) => { text(s, x, 363.5, w, 9.5); out += `<path d="M${(486 + i * 60.1).toFixed(1)} 351v4" stroke="#fff"/>`; });
out += '<path d="M489 127h7l-3.500 4z" fill="#fff"/>';
text('CADCHF,H1&#160; 0.77564 0.77625 0.77561 0.77588', 500, 132, 190, 9.5);
text('CADCHF_Timeframe-H1_SellTrades', 1177, 133, 145, 9.8, true);
out += '<circle cx="1184" cy="129.500" r="4.500" fill="none" stroke="#fff"/><path d="M1181.500 131c1 2 4 2 5 0M1182.500 127.500v1M1185.500 127.500v1" stroke="#fff" fill="none"/>';
text('Porfolio of strategies v.6', 1188, 151, 125, 11.2, true);
text('Programmed by Lvn@tut.by http://goo.gl/e9BacA', 1188, 165, 225, 10.5, true);
out += '<path d="M1031 173.500H1188" stroke="#fff" stroke-dasharray="3 1.200"/>';
[['Last Signal:&#160; -', 192, 69], ['Open P/L: -', 206.500, 51], ['Account Balance: -', 221.500, 84], ['Total profits/losses so far: -/-', 236.500, 132], ['Total P/L so far: -', 251.500, 78]]
  .forEach(([s, y, w]) => text(s, 1188, y, w, 10.5, true));
document.getElementById('chart').innerHTML = out;
```
